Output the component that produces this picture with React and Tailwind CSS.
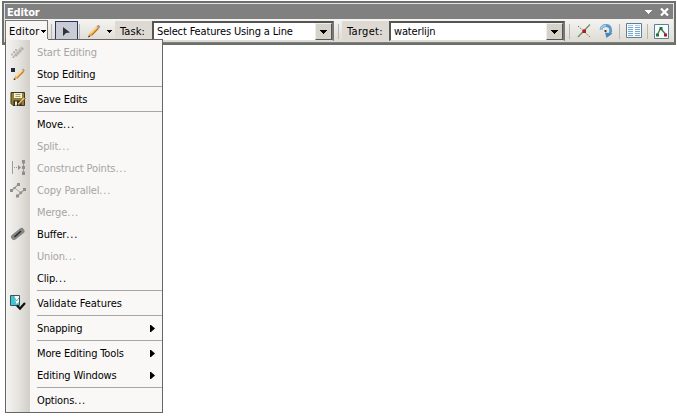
import React from "react";

function Caret({ className = "" }) {
  return (
    <svg width="7" height="4" viewBox="0 0 7 4" className={className} shapeRendering="crispEdges">
      <path d="M0 0h7L3.500 4z" fill="currentColor" />
    </svg>
  );
}

function SmallCaret({ className = "" }) {
  return (
    <svg width="5" height="3" viewBox="0 0 5 3" shapeRendering="crispEdges" className={className}>
      <path d="M0 0h5v1H0zM1 1h3v1H1zM2 2h1v1H2z" />
    </svg>
  );
}

function Pencil() {
  return (
    <svg width="16" height="16" viewBox="0 0 16 16">
      <path d="M2.500 14l1.200-3.700L10.500 3.500l2.300 2.200-6.600 6.800z" fill="#e8a440" />
      <path d="M3.700 10.300l6.800-6.800.9.900-6.700 6.700z" fill="#ffdc91" />
      <path d="M5.400 12.200l6.700-7 .7.600-6.600 6.700z" fill="#a8672a" />
      <path d="M10.500 3.500l1.200-1.200c.5-.4.900-.4 1.300 0l1 1c.4.400.3.800-.1 1.200l-1.200 1.200z" fill="#c0908a" />
      <path d="M2 14.500l.9-2.300 1.500 1.400z" fill="#3c3025" />
    </svg>
  );
}

function StartIcon() {
  return (
    <svg width="18" height="16" viewBox="0 0 18 16">
      <path d="M4 13.500l1-3.500 7-7.500 3.500 2-7.500 7.500z" fill="#c8c6c3" />
      <path d="M6.500 12l7.500-8" stroke="#b0aeab" strokeWidth="2" strokeDasharray="2 1" />
      <path d="M2 10.500h2M4 8h2M6 6h2" stroke="#bbb9b6" strokeWidth="2" />
      <path d="M3.500 14l2-.500-1.500-1.500z" fill="#999" />
    </svg>
  );
}

function StopIcon() {
  return (
    <svg width="18" height="16" viewBox="0 0 18 16">
      <path d="M2 2h4v4H2z" fill="#202b42" />
      <path d="M5 13.500l1.200-3.500L13 3.700l2 1.800-6.700 6.700z" fill="#efad45" />
      <path d="M6.200 10L13 3.700l.9.700-6.600 6.600z" fill="#ffe3a1" />
      <path d="M7.700 12.200l6.700-7 .6.600-6.700 6.600z" fill="#985c31" />
      <path d="M13 3.700l1.100-1.100L16 4.400l-1.100 1.100z" fill="#bd8f83" />
      <path d="M4.500 14l.8-2 1.400 1.400z" fill="#222" />
    </svg>
  );
}

function SaveIcon() {
  return (
    <svg width="18" height="16" viewBox="0 0 18 16">
      <path d="M2 1.500h13.500v13H4l-2-2z" fill="#8f8032" stroke="#403916" />
      <path d="M5 2h8v5H5z" fill="#f2efdc" />
      <path d="M6.500 3.500h5M6.500 5.500h5" stroke="#a49a65" />
      <path d="M4.500 9.500h8v5h-8z" fill="#302d20" />
      <path d="M6 10.500h2v4H6z" fill="#f3efdf" />
      <path d="M8 13.500l6.500-7 2 1.500-7 6.500z" fill="#edc07a" />
      <path d="M9.500 14l7-6.500" stroke="#78482b" />
      <path d="M7.500 14.500l1-2 1.200 1.300z" fill="#222" />
    </svg>
  );
}

function PointsIcon() {
  return (
    <svg width="18" height="16" viewBox="0 0 18 16" fill="#8f8f8f">
      <path d="M3.500 1v13M14.500 2v12" stroke="#9c9c9c" />
      <path d="M5 7.500h5" stroke="#999" strokeDasharray="1 1" />
      <path d="M9 5l3 2.500L9 10zM13 0h3v3.500h-3zM13 6h3v3h-3zM13 11.500h3V15h-3z" />
    </svg>
  );
}

function ParallelIcon() {
  return (
    <svg width="18" height="16" viewBox="0 0 18 16" fill="#8f8f8f">
      <path d="M2.500 8.500l7-6M8.500 14l7-6.500" stroke="#a2a2a2" strokeWidth="1.300" />
      <path d="M5.500 6l6 4.500" stroke="#aaa" />
      <path d="M1 7h3v3H1zM8 1h3v3H8zM7 12.500h3v3H7zM14 6h3v3h-3zM4.500 5h2v2h-2zM10.500 9.500H13V12h-2.500z" />
    </svg>
  );
}

function BufferIcon() {
  return (
    <svg width="18" height="16" viewBox="0 0 18 16" strokeLinecap="round">
      <path d="M5 11l7.500-6" stroke="#858585" strokeWidth="6" />
      <path d="M6 10.500l5.500-5" stroke="#292929" strokeWidth="1.500" />
    </svg>
  );
}

function ValidateIcon() {
  return (
    <svg width="18" height="16" viewBox="0 0 18 16">
      <path d="M1.500.500h9v10h-9z" fill="#3ec5d6" stroke="#35565e" />
      <path d="M5 1h5v6L7.500 9z" fill="#f7fcfb" />
      <path d="M4.500 1l3 5 2.500-3" fill="none" stroke="#688" strokeWidth=".8" />
      <path d="M8 10.500l3 3L16 8" fill="none" stroke="#111" strokeWidth="2.300" />
    </svg>
  );
}

const items = [
  { label: "Start Editing", icon: <StartIcon />, off: true },
  { label: "Stop Editing", icon: <StopIcon /> },
  null,
  { label: "Save Edits", icon: <SaveIcon /> },
  null,
  { label: "Move", dots: true },
  { label: "Split", dots: true, off: true },
  { label: "Construct Points", dots: true, icon: <PointsIcon />, off: true },
  { label: "Copy Parallel", dots: true, icon: <ParallelIcon />, off: true },
  { label: "Merge", dots: true, off: true },
  { label: "Buffer", dots: true, icon: <BufferIcon /> },
  { label: "Union", dots: true, off: true },
  { label: "Clip", dots: true },
  null,
  { label: "Validate Features", icon: <ValidateIcon />, wide: true },
  null,
  { label: "Snapping", sub: true },
  null,
  { label: "More Editing Tools", sub: true },
  { label: "Editing Windows", sub: true },
  null,
  { label: "Options", dots: true },
];

function EditorMenu() {
  return (
    <div className="absolute left-[5px] top-[39px] h-[374px] w-[158px] border border-[#666] bg-[#f9f8f7] bg-[linear-gradient(90deg,#f5f4f2_0px,#e6e4df_12px,#d2cfc8_24px,transparent_24px)] pt-px">
      {items.map((item, i) =>
        item ? (
          <div key={i} className={`flex h-[22px] items-center ${item.off ? "text-[#a5a5a3]" : "text-black"}`}>
            <div className="flex w-[31px] shrink-0 pl-[3px]">{item.icon}</div>
            <span className={`flex-1 pt-[2px] ${item.wide ? "tracking-[-0.03px]" : ""}`}>
              {item.label}
              {item.dots && <span className="tracking-[0.85px]">...</span>}
            </span>
            {item.sub && (
              <svg width="5" height="7" viewBox="0 0 5 7" className="mr-[7px]">
                <path d="M0 0h1l4 3.500L1 7H0z" />
              </svg>
            )}
          </div>
        ) : (
          <div key={i} className="flex h-[3px] items-center pl-[31px]">
            <div className="h-px w-full bg-[#a6a6a6]" />
          </div>
        )
      )}
      <div className="absolute -top-px left-0 h-px w-[42px] bg-[#f5f4f2]" />
    </div>
  );
}

function Divider({ className = "" }) {
  return <div className={`h-[15px] w-px shrink-0 bg-[#b9b7b1] ${className}`} />;
}

function Combo({ value, className }) {
  return (
    <div className={`flex h-[20px] shrink-0 items-center border-2 border-b border-[#777] border-b-[#deddd8] border-l-[#555] border-t-[#555] bg-white ${className}`}>
      <span className="flex-1 pl-[3px] pt-px">{value}</span>
      <span className="flex h-full w-[17px] items-center justify-center border border-b-[#555] border-l-[#eee] border-r-[#555] border-t-[#eee] bg-[#d5d2ca]">
        <Caret />
      </span>
    </div>
  );
}

export default function App() {
  return (
    <div className="relative h-[419px] w-[677px] overflow-hidden whitespace-nowrap bg-white pl-[2px] pt-px font-['DejaVu_Sans_Condensed','DejaVu_Sans',sans-serif] text-[11px] leading-[14px] tracking-[-0.15px] text-black [font-stretch:condensed]">
      <div className="h-[44px] w-[674px] border-2 border-[#6c706b] bg-[#808080]">
        <div className="flex h-[16px] items-center border-x border-t border-[#e4e4e4] pl-[2px] pr-[4px] text-white">
          <span className="flex-1 pt-[2px] text-[11px] font-bold tracking-[-0.2px]">Editor</span>
          <Caret className="mr-[8px]" />
          <svg width="9" height="8" viewBox="0 0 9 8">
            <path d="M1 .500l7 7M8 .500l-7 7" stroke="white" strokeWidth="2.200" />
          </svg>
        </div>
        <div className="flex h-[23px] items-center border-x border-[#e4e4e4] bg-gradient-to-b from-[#f5f4f2] to-[#dedbd3] pt-px">
          <div className="flex h-[22px] w-[43px] shrink-0 items-center border border-[#777] border-b-0 bg-[#f7f6f5] pl-[3px]">
            <span className="w-[32px] tracking-[0.2px]">Editor</span>
            <SmallCaret className="shrink-0" />
          </div>
          <Divider className="ml-[3px]" />
          <div className="ml-[3px] flex h-[21px] w-[23px] shrink-0 items-center justify-center border border-[#27365f] bg-[#c9ccd4]">
            <svg width="7" height="9" viewBox="0 0 7 9"><path d="M0 0l7 5.500-4 .500L0 9z" fill="#303338" /></svg>
          </div>
          <Divider className="ml-px" />
          <div className="ml-[6px] flex shrink-0"><Pencil /></div>
          <SmallCaret className="ml-[5px] shrink-0" />
          <div className="ml-[3px] flex h-[20px] w-[37px] shrink-0 items-center bg-[#dedad3] pl-[5px] pt-px tracking-[0.1px]">Task:</div>
          <Combo value="Select Features Using a Line" className="w-[182px]" />
          <Divider className="ml-[4px]" />
          <div className="ml-[3px] flex h-[20px] w-[47px] shrink-0 items-center bg-[#dedad3] pl-[5px] pt-px tracking-[0.3px]">Target:</div>
          <Combo value="waterlijn" className="w-[176px]" />
          <Divider className="ml-[4px]" />
          <svg width="16" height="16" viewBox="0 0 16 16" className="ml-[6px] shrink-0">
            <path d="M2 14L14 1.500" stroke="#689464" strokeWidth="1.300" />
            <path d="M2 3l12 11" stroke="#777b65" strokeDasharray="1.500 1" />
            <path d="M6.500 6.500h3.500V10H6.500z" fill="#b51922" />
          </svg>
          <svg width="16" height="16" viewBox="0 0 16 16" className="ml-[6px] shrink-0">
            <path d="M3 7C3 3.500 6 2.500 8 2.500c4.500 0 5.500 4 4 8" fill="none" stroke="#5c9bc9" strokeWidth="2.800" />
            <path d="M3 7C3 3.500 6 2.500 8 2.500" fill="none" stroke="#a9d2ec" strokeWidth="1.400" />
            <path d="M7 9.500l7.500 1L8.500 15z" fill="#4785b7" />
            <path d="M6.500 7h2v2h-2z" fill="#474535" />
          </svg>
          <Divider className="ml-[5px]" />
          <svg width="16" height="16" viewBox="0 0 16 16" className="ml-[6px] shrink-0">
            <path d="M.5.500h15v14H.5z" fill="#f5faff" stroke="#5f7f98" />
            <path d="M2 4.500h5M2 6.500h5M2 8.500h5M2 10.500h5M2 12.500h5M9 4.500h5M9 6.500h5M9 8.500h5M9 10.500h5M9 12.500h5" stroke="#7ca8ce" />
            <path d="M2 2.500h5M9 2.500h5" stroke="#a9cbe8" />
          </svg>
          <Divider className="ml-[5px]" />
          <svg width="15" height="15" viewBox="0 0 15 15" className="ml-[6px] shrink-0">
            <path d="M.5.500h14v14H.5z" fill="#f8fcfc" stroke="#5e7f95" />
            <path d="M3.500 10.500l3-6 5 5.500" fill="none" stroke="#3c7751" strokeWidth="1.300" />
            <path d="M2 9.500h3v3H2zM5.500 3h3v3h-3z" fill="#28713b" />
            <path d="M10 9.500h3v3h-3z" fill="#b01925" />
          </svg>
        </div>
      </div>
      <EditorMenu />
    </div>
  );
}
